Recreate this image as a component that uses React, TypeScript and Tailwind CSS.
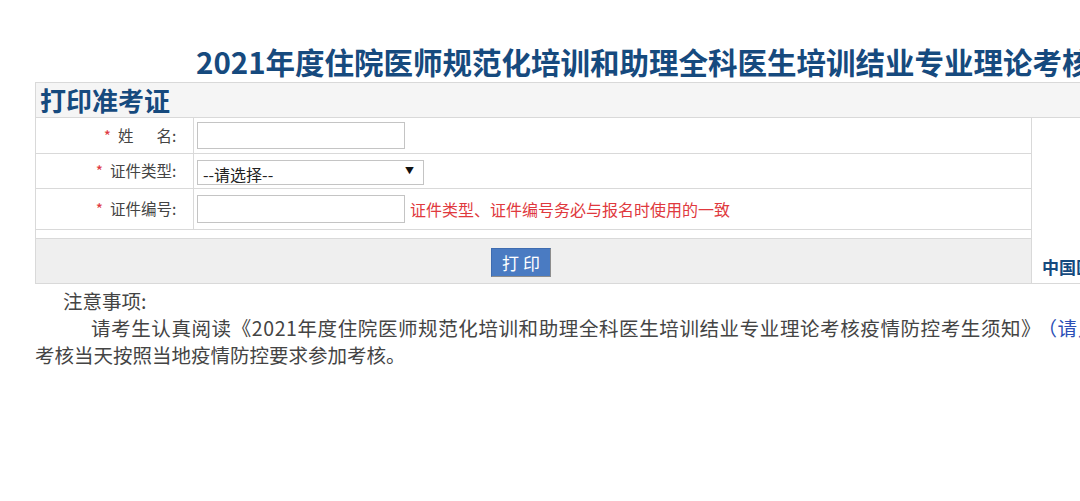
import React from 'react'

const Star = () => <span className="text-[#e0393e] mr-[7px]">*</span>
const Colon = () => <span className="inline-block w-[9px]">:</span>

export default function App() {
  return (
    <div className="w-[1080px] h-[501px] overflow-hidden bg-white font-['Noto_Sans_CJK_SC',sans-serif] text-[#444]">
      <div className="w-[1400px]">
        {/* page title */}
        <h1 className="h-[82px] pt-[41px] pl-[196px] text-[29.5px] leading-[40px] font-bold text-[#164a7e] whitespace-nowrap">
          2021年度住院医师规范化培训和助理全科医生培训结业专业理论考核准考证打印
        </h1>

        <div className="ml-[35px] border border-[#d9d9d9]">
          <div className="h-[35px] bg-[#f5f5f5] border-b border-[#d9d9d9] pl-[4px] text-[26px] leading-[34px] font-bold text-[#164a7e]">
            打印准考证
          </div>

          <div className="flex">
            {/* form table */}
            <div className="w-[996px] border-r border-[#d9d9d9]">
              <div className="flex h-[36px] border-b border-[#d9d9d9]">
                <div className="w-[158px] border-r border-[#d9d9d9] flex items-center justify-end pr-[12px] text-[15.5px]">
                  <Star />
                  <span>姓</span>
                  <span className="inline-block w-[23px]" />
                  <span>名</span>
                  <Colon />
                </div>
                <div className="flex items-center pl-[3px]">
                  <input className="w-[208px] h-[27px] border border-[#c4c4c4] outline-none" />
                </div>
              </div>

              <div className="flex h-[35px] border-b border-[#d9d9d9]">
                <div className="w-[158px] border-r border-[#d9d9d9] flex items-center justify-end pr-[12px] text-[15.5px]">
                  <Star />
                  <span>证件类型</span>
                  <Colon />
                </div>
                <div className="flex items-center pl-[3px]">
                  <div className="relative w-[227px] h-[25px] mt-[3px]">
                    <select className="appearance-none w-full h-full border border-[#c4c4c4] bg-white pl-[5px] pt-[2px] text-[16px] leading-[20px] text-[#222] outline-none">
                      <option>--请选择--</option>
                    </select>
                    <span className="pointer-events-none absolute right-[10px] top-[5px] text-[9px] leading-[12px] text-[#111]">▼</span>
                  </div>
                </div>
              </div>

              <div className="flex h-[41px] border-b border-[#d9d9d9]">
                <div className="w-[158px] border-r border-[#d9d9d9] flex items-center justify-end pr-[12px] text-[15.5px]">
                  <Star />
                  <span>证件编号</span>
                  <Colon />
                </div>
                <div className="flex items-center pl-[3px]">
                  <input className="w-[208px] h-[28px] border border-[#c4c4c4] outline-none" />
                  <span className="ml-[5px] text-[16px] text-[#e0393e] whitespace-nowrap">
                    证件类型、证件编号务必与报名时使用的一致
                  </span>
                </div>
              </div>

              <div className="h-[8px]" />

              <div className="h-[45px] bg-[#efefef] border-t border-[#d9d9d9] pl-[455px] pt-[9px]">
                <button className="w-[60px] h-[29px] bg-[#4a7bc2] border border-[#3f6cb0] border-r-[#8d8d8d] border-b-[#8d8d8d] text-white text-[17px] leading-[26px]">
                  打 印
                </button>
              </div>
            </div>

            {/* right column */}
            <div className="flex-1 flex items-end pl-[10px] pb-[6px]">
              <span className="text-[17px] leading-[20px] font-bold text-[#164a7e] whitespace-nowrap">
                中国医师协会毕业后医学教育部
              </span>
            </div>
          </div>
        </div>

        {/* notes */}
        <div className="ml-[35px] mt-[3px] text-[19.5px] leading-[27px] text-[#444]">
          <p className="pl-[28px]">注意事项:</p>
          <p className="pl-[56px] whitespace-nowrap tracking-[0.6px]">
            请考生认真阅读《2021年度住院医师规范化培训和助理全科医生培训结业专业理论考核疫情防控考生须知》
            <span className="text-[#2b4fb6] ml-[6px]">（请点击查看）</span>，
          </p>
          <p>考核当天按照当地疫情防控要求参加考核。</p>
        </div>
      </div>
    </div>
  )
}
